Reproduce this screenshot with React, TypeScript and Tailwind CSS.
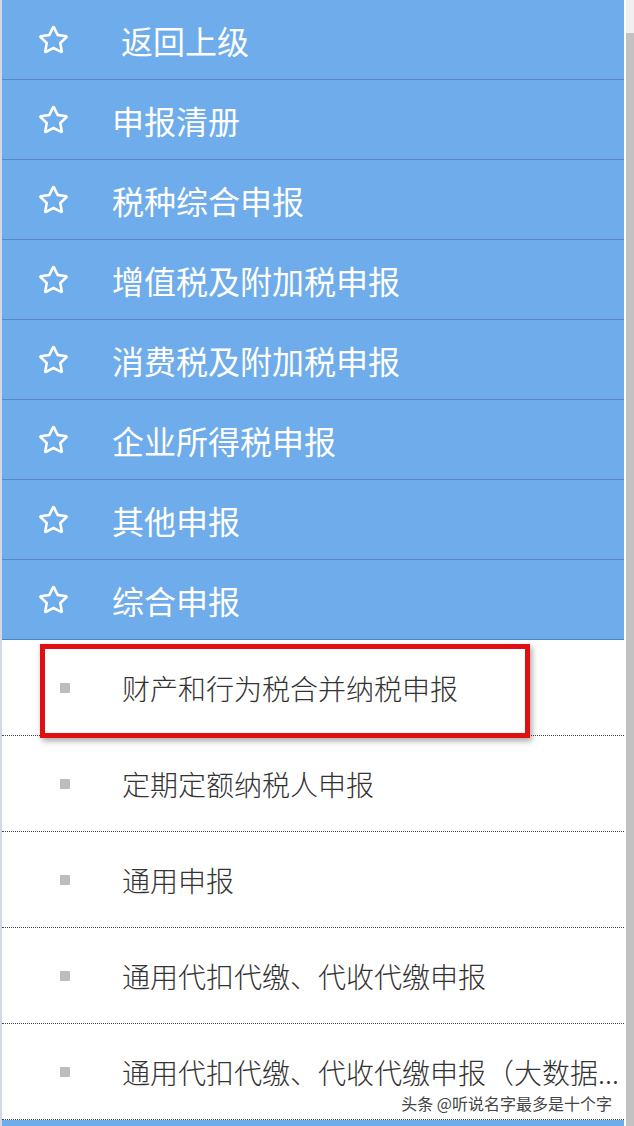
import { FaRegStar } from "react-icons/fa";

const menus = [
  "返回上级",
  "申报清册",
  "税种综合申报",
  "增值税及附加税申报",
  "消费税及附加税申报",
  "企业所得税申报",
  "其他申报",
  "综合申报",
];

const subs = [
  "财产和行为税合并纳税申报",
  "定期定额纳税人申报",
  "通用申报",
  "通用代扣代缴、代收代缴申报",
  "通用代扣代缴、代收代缴申报（大数据...",
];

const font = { fontFamily: '"Noto Sans CJK SC", "Noto Sans", sans-serif' };

const App = () => {
  return (
    <div className="flex h-[1126px] w-[634px] overflow-hidden bg-white" style={font}>
      <div className="relative flex w-[624px] flex-col border-l-2 border-[#d3d9e0]">
        {menus.map((m, i) => (
          <div
            key={m}
            className={`flex h-[80px] shrink-0 items-center border-b bg-[#6eaceb] ${
              i === menus.length - 1 ? "h-[78px] border-[#4f83c6]" : "border-[#5a87c2]"
            }`}
          >
            <FaRegStar className="ml-[36px] text-white" size={31} />
            <span
              className={`text-[32px] leading-none text-white ${i === 0 ? "ml-[52px]" : "ml-[43px]"}`}
            >
              {m}
            </span>
          </div>
        ))}

        {subs.map((s, i) => (
          <div
            key={s}
            className="relative flex h-[96px] shrink-0 items-center border-b border-dotted border-[#444]"
          >
            <div className="ml-[58px] h-[10px] w-[10px] shrink-0 bg-[#bdbdbd]" />
            <span className="ml-[52px] min-w-0 whitespace-nowrap text-[28px] leading-none font-light text-[#333]">
              {s}
            </span>
            {i === 0 ? (
              <div className="absolute left-[38px] top-[4px] h-[94px] w-[490px] border-[5px] border-[#e10f12] shadow-[2px_3px_6px_rgba(0,0,0,0.35)]" />
            ) : null}
          </div>
        ))}

        <div className="h-[10px] shrink-0 bg-[#6eaceb]" />

        <div className="absolute right-[12px] top-[1095px] text-[16px] leading-none text-[#444] [text-shadow:0_0_2px_#fff]">
          头条 @听说名字最多是十个字
        </div>
      </div>

      <div className="flex w-[10px] flex-col bg-white pl-[2px]">
        <div className="h-[33px] bg-[#f0f0f0]" />
        <div className="flex-1 bg-[#c2c2c2]" />
      </div>
    </div>
  );
};

export default App;
